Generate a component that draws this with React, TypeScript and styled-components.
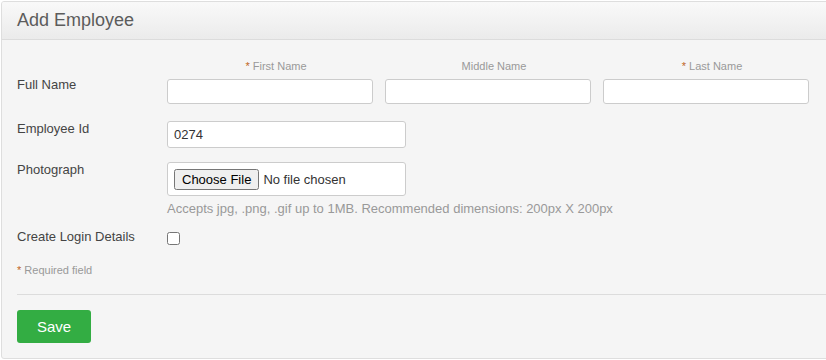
import { FC } from "react";
import styled, { createGlobalStyle } from "styled-components";

const GlobalStyle = createGlobalStyle`
  body {
    margin: 0;
    overflow: hidden;
    background: #fff;
    font-family: "Liberation Sans", Arial, sans-serif;
  }
`;

const App: FC = () => {
  return (
    <>
      <GlobalStyle />
      <Panel>
        <Header>Add Employee</Header>
        <Body>
          <NameRow>
            <Label>Full Name</Label>
            <NameGrid>
              <NameCell>
                <Caption>
                  <Star>*</Star> First Name
                </Caption>
                <TextInput />
              </NameCell>
              <NameCell>
                <Caption>Middle Name</Caption>
                <TextInput />
              </NameCell>
              <NameCell>
                <Caption>
                  <Star>*</Star> Last Name
                </Caption>
                <TextInput />
              </NameCell>
            </NameGrid>
          </NameRow>

          <Row gap={17}>
            <Label>Employee Id</Label>
            <Field>
              <TextInput defaultValue="0274" tall />
            </Field>
          </Row>

          <Row gap={14}>
            <Label>Photograph</Label>
            <Field>
              <FileBox>
                <input type="file" />
              </FileBox>
              <Hint>
                Accepts jpg, .png, .gif up to 1MB. Recommended dimensions:
                200px X 200px
              </Hint>
            </Field>
          </Row>

          <Row gap={13}>
            <Label>Create Login Details</Label>
            <Field>
              <Check type="checkbox" />
            </Field>
          </Row>

          <Required>
            <Star>*</Star> Required field
          </Required>

          <Divider />
          <SaveButton>Save</SaveButton>
        </Body>
      </Panel>
    </>
  );
};

export default App;

const Panel = styled.div`
  margin: 1px 0 0 1px;
  width: 860px;
  height: 358px;
  box-sizing: border-box;
  border: 1px solid #dedede;
  border-radius: 3px;
  background: #f5f5f5;
  overflow: hidden;
`;

const Header = styled.div`
  height: 38px;
  box-sizing: border-box;
  padding: 8px 15px 0;
  font-size: 18px;
  color: #5c5c5c;
  background: linear-gradient(to bottom, #f9f9f9, #ebebeb);
  border-bottom: 1px solid #dcdcdc;
`;

const Body = styled.div`
  padding: 0 15px;
`;

const Row = styled.div<{ gap: number }>`
  display: grid;
  grid-template-columns: 150px 1fr;
  margin-top: ${(p) => p.gap}px;
`;

const NameRow = styled(Row).attrs({ gap: 19 })``;

const Label = styled.div`
  font-size: 13px;
  color: #444;
  align-self: start;

  ${NameRow} & {
    align-self: end;
    margin-bottom: 12px;
  }
`;

const NameGrid = styled.div`
  display: grid;
  grid-template-columns: repeat(3, 206px);
  column-gap: 12px;
`;

const NameCell = styled.div`
  display: flex;
  flex-direction: column;
  align-items: stretch;
`;

const Caption = styled.div`
  text-align: center;
  padding-left: 12px;
  font-size: 11px;
  line-height: 14px;
  color: #999;
  margin-bottom: 6px;
`;

const Star = styled.span`
  color: #c0651e;
`;

const Field = styled.div`
  display: flex;
  flex-direction: column;
  align-items: flex-start;
`;

const TextInput = styled.input.attrs({ type: "text" })<{ tall?: boolean }>`
  box-sizing: border-box;
  width: ${(p) => (p.tall ? "239px" : "100%")};
  height: ${(p) => (p.tall ? "27px" : "25px")};
  border: 1px solid #cccccc;
  border-radius: 3px;
  background: #fff;
  padding: 0 6px;
  font-family: "Liberation Sans", Arial, sans-serif;
  font-size: 13px;
  color: #333;
  outline: none;
`;

const FileBox = styled.div`
  box-sizing: border-box;
  width: 239px;
  height: 34px;
  border: 1px solid #cccccc;
  border-radius: 3px;
  background: #fff;
  padding: 5px 6px;
  display: flex;
  align-items: center;

  input {
    font-family: "Liberation Sans", Arial, sans-serif;
    font-size: 13px;
    color: #333;
  }
`;

const Hint = styled.div`
  margin-top: 5px;
  font-size: 13px;
  color: #999;
`;

const Check = styled.input`
  width: 13px;
  height: 13px;
  margin: 3px 0 0 0;
`;

const Required = styled.div`
  margin-top: 19px;
  font-size: 11px;
  color: #999;
`;

const Divider = styled.hr`
  border: 0;
  border-top: 1px solid #dcdcdc;
  margin: 18px 0 0;
  width: 100%;
`;

const SaveButton = styled.button`
  margin-top: 15px;
  width: 74px;
  height: 33px;
  border: 0;
  border-radius: 3px;
  background: #33ad43;
  color: #fff;
  font-family: "Liberation Sans", Arial, sans-serif;
  font-size: 15px;
  cursor: pointer;
`;
